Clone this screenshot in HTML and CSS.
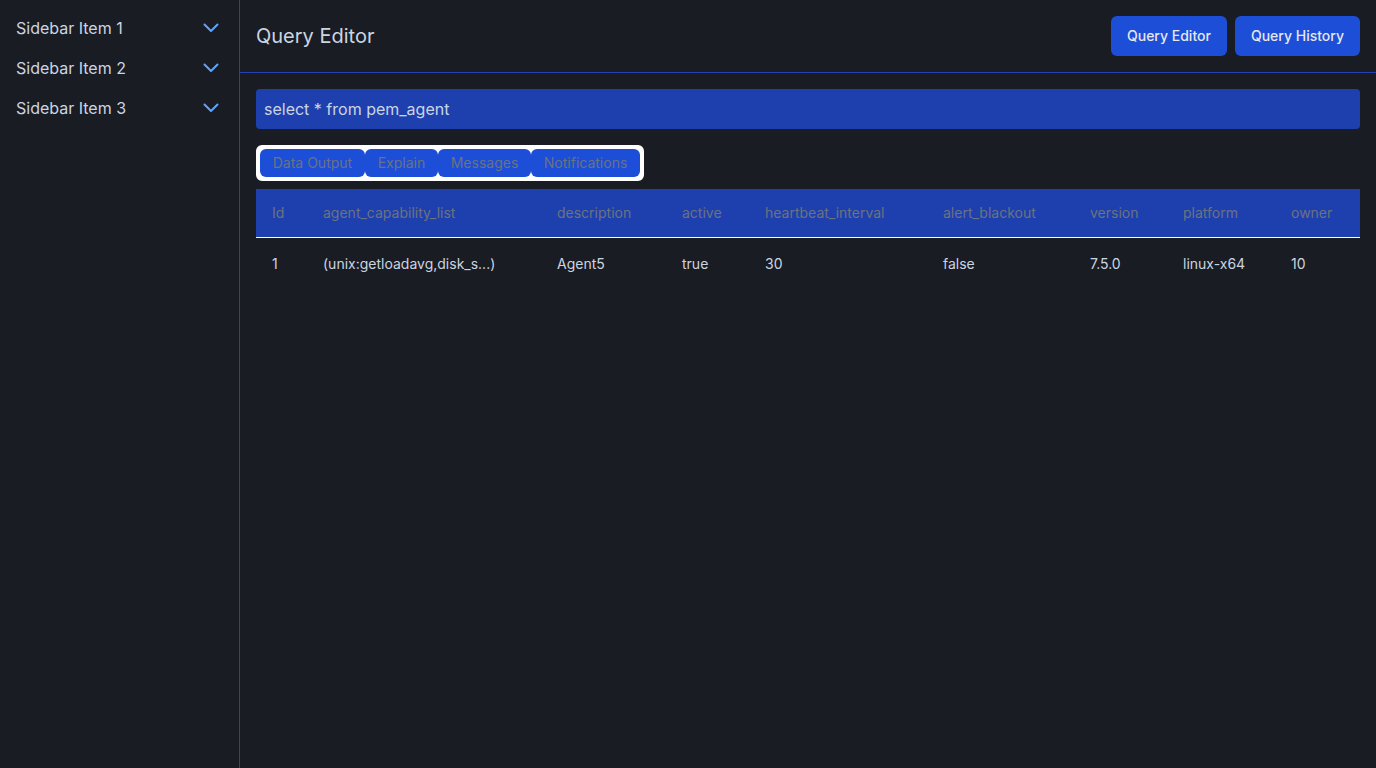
FILE: index.html
```html
<!DOCTYPE html>
<html>
<head>
<meta charset="utf-8">
<link rel="stylesheet" href="styles.css">
</head>
<body>
<div class="app">
  <aside class="sidebar">
    <div class="side-item"><span>Sidebar Item 1</span><svg class="chev" width="16" height="10" viewBox="0 0 16 10"><path d="M1.5 1.5 L8 8 L14.5 1.5" fill="none" stroke="#60a5fa" stroke-width="2" stroke-linecap="round" stroke-linejoin="round"/></svg></div>
    <div class="side-item"><span>Sidebar Item 2</span><svg class="chev" width="16" height="10" viewBox="0 0 16 10"><path d="M1.5 1.5 L8 8 L14.5 1.5" fill="none" stroke="#60a5fa" stroke-width="2" stroke-linecap="round" stroke-linejoin="round"/></svg></div>
    <div class="side-item"><span>Sidebar Item 3</span><svg class="chev" width="16" height="10" viewBox="0 0 16 10"><path d="M1.5 1.5 L8 8 L14.5 1.5" fill="none" stroke="#60a5fa" stroke-width="2" stroke-linecap="round" stroke-linejoin="round"/></svg></div>
  </aside>
  <main class="main">
    <header class="header">
      <h1 class="title">Query Editor</h1>
      <div class="actions">
        <button class="btn">Query Editor</button>
        <button class="btn">Query History</button>
      </div>
    </header>
    <section class="content">
      <div class="query">select * from pem_agent</div>
      <div class="tabs-row">
        <div class="tabs">
          <button class="tab">Data Output</button>
          <button class="tab">Explain</button>
          <button class="tab">Messages</button>
          <button class="tab">Notifications</button>
        </div>
      </div>
      <table class="grid">
        <colgroup>
          <col style="width:51px"><col style="width:234px"><col style="width:125px"><col style="width:83px"><col style="width:178px"><col style="width:147px"><col style="width:93px"><col style="width:108px"><col style="width:85px">
        </colgroup>
        <thead>
          <tr><th>Id</th><th>agent_capability_list</th><th>description</th><th>active</th><th>heartbeat_interval</th><th>alert_blackout</th><th>version</th><th>platform</th><th>owner</th></tr>
        </thead>
        <tbody>
          <tr><td>1</td><td>(unix:getloadavg,disk_s...)</td><td>Agent5</td><td>true</td><td>30</td><td>false</td><td>7.5.0</td><td>linux-x64</td><td>10</td></tr>
        </tbody>
      </table>
    </section>
  </main>
</div>
</body>
</html>
```

FILE: styles.css
```css
* { box-sizing: border-box; }
html, body { margin: 0; padding: 0; }
body {
  background: #1a1c23;
  font-family: Inter, "Noto Sans", sans-serif;
  color: #cbd5e1;
  width: 1376px;
  height: 768px;
  overflow: hidden;
}
.app { display: flex; height: 768px; }
.sidebar {
  width: 240px;
  flex: none;
  border-right: 1px solid #2541b2;
  padding-top: 8px;
}
.side-item {
  height: 40px;
  display: flex;
  align-items: center;
  justify-content: space-between;
  padding: 0 20px 0 16px;
  font-size: 16px;
  color: #cbd5e1;
}
.chev { display: block; }
.main { flex: 1; display: flex; flex-direction: column; min-width: 0; }
.header {
  height: 73px;
  display: flex;
  align-items: center;
  justify-content: space-between;
  padding: 0 16px;
  border-bottom: 1px solid #2541b2;
}
.title { margin: 0; font-size: 20px; font-weight: 400; color: #cbd5e1; }
.actions { display: flex; gap: 8px; }
.btn {
  height: 40px;
  padding: 0 16px 1px;
  border: none;
  border-radius: 6px;
  background: #1d4ed8;
  color: #e5e7eb;
  font-family: inherit;
  font-size: 14px;
  font-weight: 500;
}
.content { padding: 16px; display: flex; flex-direction: column; }
.query {
  height: 40px;
  background: #1e40af;
  border-radius: 4px;
  padding: 0 8px;
  display: flex;
  align-items: center;
  font-size: 16px;
  color: #cbd5e1;
}
.tabs-row { display: flex; margin-top: 16px; margin-bottom: 8px; }
.tabs {
  display: flex;
  border: 4px solid #ffffff;
  background: #ffffff;
  border-radius: 6px;
}
.tab {
  height: 28px;
  padding: 0 12.75px 2px;
  border: none;
  border-radius: 6px;
  background: #1d4ed8;
  color: #6b7280;
  font-family: inherit;
  font-size: 14px;
}
.grid {
  width: 100%;
  border-collapse: collapse;
  table-layout: fixed;
  font-size: 14px;
}
.grid thead tr { background: #1e40af; border-bottom: 1px solid #ffffff; }
.grid th {
  text-align: left;
  font-weight: 400;
  color: #6b7280;
  padding: 14px 16px;
  line-height: 20px;
  white-space: nowrap;
}
.grid td {
  padding: 16px;
  line-height: 20px;
  color: #cbd5e1;
  white-space: nowrap;
}
```
